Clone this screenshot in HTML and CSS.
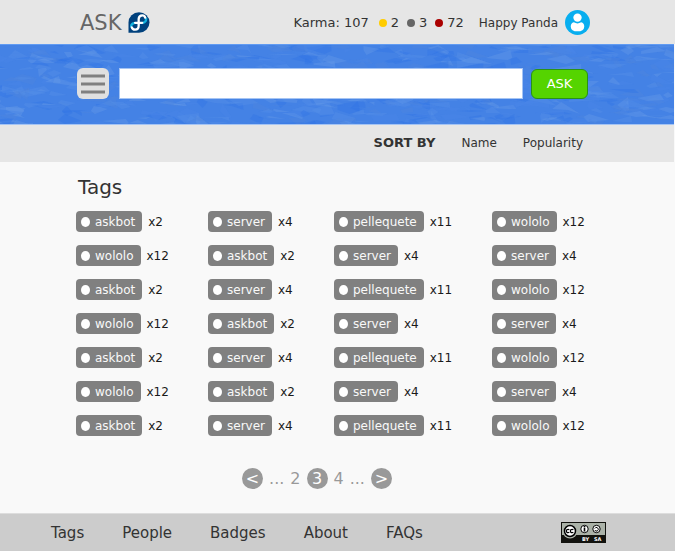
FILE: index.html
```html
<!DOCTYPE html>
<html lang="en">
<head>
<meta charset="utf-8">
<title>Ask Fedora - Tags</title>
<link rel="stylesheet" href="styles.css">
</head>
<body>
<header class="topbar">
  <a class="brand" href="#">ASK
    <svg class="logo" viewBox="0 0 66 64" aria-hidden="true">
      <path d="M1 63V32A32 31 0 1 1 33 63Z" fill="#00417d"/>
      <g fill="none" stroke-linecap="round" stroke-width="7">
        <path d="M55 20Q55 31 45 33" stroke="#12b3df"/>
        <path d="M18 34Q9 36 9 44" stroke="#12b3df"/>
        <path d="M52 17Q50 10 43 10Q33 10 32 21V42Q32 54 21 54Q13 54 11 47" stroke="#fff"/>
        <path d="M21 33H43" stroke="#fff"/>
      </g>
    </svg>
  </a>
  <div class="account">
    <span class="karma">Karma: 107</span>
    <ul class="medals">
      <li class="medal gold">2</li>
      <li class="medal silver">3</li>
      <li class="medal bronze">72</li>
    </ul>
    <a class="user" href="#">Happy Panda
      <svg class="avatar" viewBox="0 0 24 24" aria-hidden="true">
        <circle cx="12" cy="12" r="12" fill="#08aeef"/>
        <circle cx="12" cy="7.3" r="4" fill="#fff"/>
        <path d="M8.5 11.8Q12 14 15.500 11.800Q18.500 12.500 18.500 16Q18.200 20.500 12 20.500T5.500 16Q5.500 12.500 8.500 11.800Z" fill="#fff"/>
      </svg>
    </a>
  </div>
</header>
<form class="band">
  <svg class="texture" viewBox="0 0 675 81" preserveAspectRatio="xMidYMid slice" aria-hidden="true"></svg>
  <button class="menu" type="button" aria-label="Menu">
    <svg viewBox="0 0 24 20"><path d="M0 2h24M0 10h24M0 18h24" stroke="#808080" stroke-width="3"/></svg>
  </button>
  <input class="search" type="search" aria-label="Search">
  <button class="ask" type="submit">ASK</button>
</form>
<nav class="sort">
  <strong>SORT BY</strong>
  <a href="#">Name</a>
  <a href="#">Popularity</a>
</nav>
<main class="content">
  <h1>Tags</h1>
  <ul class="tags">
    <li><a class="tag" href="#">askbot</a>x2</li>
    <li><a class="tag" href="#">server</a>x4</li>
    <li><a class="tag" href="#">pellequete</a>x11</li>
    <li><a class="tag" href="#">wololo</a>x12</li>
    <li><a class="tag" href="#">wololo</a>x12</li>
    <li><a class="tag" href="#">askbot</a>x2</li>
    <li><a class="tag" href="#">server</a>x4</li>
    <li><a class="tag" href="#">server</a>x4</li>
    <li><a class="tag" href="#">askbot</a>x2</li>
    <li><a class="tag" href="#">server</a>x4</li>
    <li><a class="tag" href="#">pellequete</a>x11</li>
    <li><a class="tag" href="#">wololo</a>x12</li>
    <li><a class="tag" href="#">wololo</a>x12</li>
    <li><a class="tag" href="#">askbot</a>x2</li>
    <li><a class="tag" href="#">server</a>x4</li>
    <li><a class="tag" href="#">server</a>x4</li>
    <li><a class="tag" href="#">askbot</a>x2</li>
    <li><a class="tag" href="#">server</a>x4</li>
    <li><a class="tag" href="#">pellequete</a>x11</li>
    <li><a class="tag" href="#">wololo</a>x12</li>
    <li><a class="tag" href="#">wololo</a>x12</li>
    <li><a class="tag" href="#">askbot</a>x2</li>
    <li><a class="tag" href="#">server</a>x4</li>
    <li><a class="tag" href="#">server</a>x4</li>
    <li><a class="tag" href="#">askbot</a>x2</li>
    <li><a class="tag" href="#">server</a>x4</li>
    <li><a class="tag" href="#">pellequete</a>x11</li>
    <li><a class="tag" href="#">wololo</a>x12</li>
  </ul>
  <nav class="pages" aria-label="Pages">
    <a class="disc" href="#">&lt;</a>
    <span>...</span>
    <a href="#">2</a>
    <a class="disc" href="#" aria-current="page">3</a>
    <a href="#">4</a>
    <span>...</span>
    <a class="disc" href="#">&gt;</a>
  </nav>
</main>
<footer class="footer">
  <nav class="links">
    <a href="#">Tags</a>
    <a href="#">People</a>
    <a href="#">Badges</a>
    <a href="#">About</a>
    <a href="#">FAQs</a>
  </nav>
  <a class="license" href="#" aria-label="License">
    <svg viewBox="0 0 45 21">
      <rect width="45" height="21" fill="#12120e"/>
      <rect x="1" y="1" width="43" height="12" fill="#abb2a8"/>
      <circle cx="9" cy="9" r="7.500" fill="#abb2a8"/>
      <circle cx="9" cy="9" r="5.500" fill="#fff" stroke="#000" stroke-width="1.500"/>
      <path d="M8.300 7.800a1.700 1.700 0 1 0 0 2.400M12.300 7.800a1.700 1.700 0 1 0 0 2.400" fill="none" stroke="#000" stroke-width="1.200"/>
      <circle cx="23.500" cy="7" r="3.700" fill="#fff" stroke="#000"/>
      <path d="M23.500 4v1M23.500 5.500v4" stroke="#000" stroke-width="1.600"/>
      <circle cx="35.500" cy="7" r="3.700" fill="#fff" stroke="#000"/>
      <path d="M33.800 6.500a1.800 1.800 0 1 1 0 1.500" fill="none" stroke="#000"/>
      <text x="21" y="19">BY</text>
      <text x="33" y="19">SA</text>
    </svg>
  </a>
</footer>
<script src="texture.js"></script>
</body>
</html>
```
FILE: styles.css
```css
* { box-sizing: border-box; }
body {
  margin: 0;
  min-height: 100vh;
  display: flex;
  flex-direction: column;
  background: #f9f9f9;
  color: #333;
  font: 12px/16px "DejaVu Sans", Verdana, sans-serif;
}
a { color: inherit; text-decoration: none; }
ul { list-style: none; margin: 0; padding: 0; }
svg { display: block; }

.topbar {
  display: flex;
  align-items: center;
  justify-content: space-between;
  height: 44px;
  padding: 1px 85px 0 80px;
  background: #e6e6e6;
}
.brand {
  display: flex;
  align-items: center;
  gap: 7px;
  color: #666;
  font-size: 21px;
  line-height: 24px;
}
.logo { width: 22px; height: 21px; }
.account, .medals, .user, .medal { display: flex; align-items: center; }
.karma { font-size: 13px; }
.medals { gap: 8px; margin: 0 15px 0 10px; font-size: 13px; }
.medal { gap: 4px; }
.medal::before {
  content: "";
  width: 8px;
  height: 8px;
  border-radius: 50%;
  background: currentColor;
}
.gold::before { background: #fc0; }
.silver::before { background: #666; }
.bronze::before { background: #a00; }
.user { gap: 7px; }
.avatar { width: 25px; height: 25px; }

.band {
  position: relative;
  display: flex;
  align-items: center;
  height: 81px;
  margin-right: 1px;
  padding: 0 86px 2px 77px;
  background: #4482e5;
  border-top: 1px solid #619bf2;
  border-bottom: 1px solid #a5c4f3;
}
.texture {
  position: absolute;
  inset: 0;
  width: 100%;
  height: 100%;
}
.menu, .search, .ask { position: relative; border: 0; }
.menu {
  width: 32px;
  height: 31px;
  padding: 5px 4px;
  border-radius: 6px;
  background: #e0e0e0;
}
.search {
  flex: 1;
  min-width: 0;
  height: 31px;
  margin: 0 8px 0 10px;
  padding: 4px 8px;
  border: 1px solid #a5c4f3;
  border-radius: 0;
  background: #fff;
  font: inherit;
}
.ask {
  width: 57px;
  height: 30px;
  padding: 0;
  border: 1px solid #2a9216;
  border-radius: 6px;
  background: #55d400;
  color: #fff;
  font: inherit;
  font-size: 13px;
}

.sort {
  display: flex;
  align-items: center;
  justify-content: flex-end;
  gap: 26px;
  height: 37px;
  margin-right: 1px;
  padding: 0 91px 1px 0;
  background: #e6e6e6;
}
.sort strong { font-size: 13px; }

.content { flex: 1; padding: 13px 75px 22px 76px; }
h1 { margin: 0 0 12px 2px; font-size: 20px; line-height: 24px; font-weight: normal; }
.tags {
  display: grid;
  grid-template-columns: 132fr 126fr 158fr 108fr;
  row-gap: 13px;
  color: #1a1a1a;
}
.tags li { display: flex; align-items: center; gap: 6px; }
.tag {
  display: flex;
  align-items: center;
  gap: 5px;
  height: 21px;
  padding: 0 7px 0 5px;
  border-radius: 4px;
  background: #808080;
  color: #f9f9f9;
}
.tag::before {
  content: "";
  width: 9px;
  height: 10px;
  border-radius: 50%;
  background: #fff;
}

.pages {
  display: flex;
  align-items: center;
  justify-content: center;
  gap: 6px;
  margin-top: 32px;
  padding-right: 42px;
  color: #999;
  font-size: 16px;
  line-height: 21px;
}
.disc {
  width: 21px;
  height: 21px;
  border-radius: 50%;
  background: #999;
  color: #fff;
  text-align: center;
}

.footer {
  display: flex;
  align-items: center;
  justify-content: space-between;
  height: 38px;
  padding: 0 69px 0 51px;
  background: #ccc;
  border-top: 1px solid #ddd;
}
.links { display: flex; gap: 38px; font-size: 15px; line-height: 20px; }
.license svg { width: 45px; height: 21px; }
.license text { fill: #fff; font: bold 5px "DejaVu Sans", sans-serif; }
```
FILE: texture.js
```javascript
// Fills the search band with faint, flat shards of blue.
var seed = 7;
function rand() {
  seed = (seed * 16807) % 2147483647;
  return seed / 2147483647;
}
var shades = ["#2f74e4", "#5a93e8", "#4f88de", "#6a9de8", "#4a88e8"];
var texture = document.querySelector(".texture");
for (var i = 0; i < 700; i++) {
  var x = rand() * 700 - 15;
  var y = rand() * 84 - 2;
  var w = 8 + rand() * 24;
  var h = 2 + rand() * 7;
  var shard = document.createElementNS("http://www.w3.org/2000/svg", "polygon");
  shard.setAttribute("points", [
    x, y,
    x + w * rand(), y - h * rand(),
    x + w, y + h * (rand() - 0.3),
    x + w * rand(), y + h * rand()
  ].map(Math.round).join(" "));
  shard.setAttribute("fill", shades[Math.floor(rand() * shades.length)]);
  shard.setAttribute("opacity", "0.35");
  texture.appendChild(shard);
}
```
